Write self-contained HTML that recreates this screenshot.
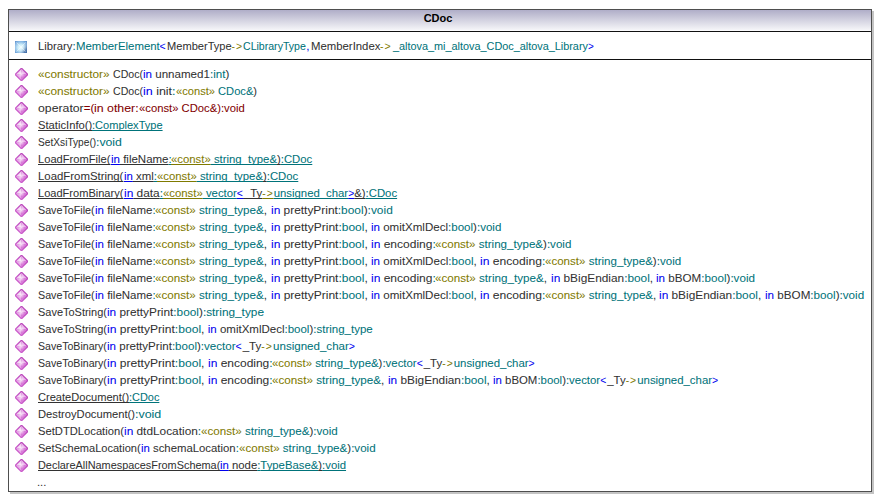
<!DOCTYPE html>
<html><head><meta charset="utf-8"><style>
html,body{margin:0;padding:0;background:#fff;width:881px;height:500px;overflow:hidden}
body{position:relative;font-family:"Liberation Sans",sans-serif}
.shr{position:absolute;left:872px;top:11px;width:2px;height:483px;background:#c4c4c4}
.shb{position:absolute;left:10px;top:492px;width:864px;height:2px;background:#c4c4c4}
.box{position:absolute;left:8px;top:9px;width:862px;height:481px;border:1px solid #4e4e4e;background:#fff}
.hd{position:absolute;left:0;top:0;width:862px;height:20px;background:linear-gradient(#b0aec8,#f5f5f8)}
.hw{position:absolute;left:0;top:20px;width:862px;height:1px;background:#fbfbfd}
.sep1{position:absolute;left:0;top:21px;width:862px;height:1px;background:#111}
.sep2{position:absolute;left:0;top:49px;width:862px;height:1px;background:#111}
.title{position:absolute;left:-2px;top:-2px;width:862px;text-align:center;font-weight:bold;font-size:11px;line-height:20px;color:#000}
.r{position:absolute;left:0;width:881px;height:17px;white-space:pre;font-size:11.5px;line-height:17px;-webkit-text-stroke:0.05px currentColor}
.c{position:absolute;top:0;transform-origin:0 0;white-space:pre}
.d{color:#323232}.t{color:#00737a}.b{color:#0000ee}.o{color:#7f7a00}.m{color:#820000}
.u span{text-decoration:underline;text-decoration-skip-ink:none}
.ic{position:absolute;left:15px;width:12px;height:12px}
</style></head><body>
<div class="shr"></div><div class="shb"></div>
<div class="box"><div class="hd"></div><div class="hw"></div><div class="sep1"></div><div class="sep2"></div><div class="title">CDoc</div></div>
<svg class="ic" style="top:41px" width="12" height="12" viewBox="0 0 12 12"><defs><radialGradient id="cg" cx="50%" cy="55%" r="72%"><stop offset="0" stop-color="#effdff"/><stop offset="0.35" stop-color="#cdeefa"/><stop offset="0.75" stop-color="#7fb2e2"/><stop offset="1" stop-color="#4a82c4"/></radialGradient><linearGradient id="cg2" x1="0" y1="0" x2="1" y2="0.6"><stop offset="0" stop-color="#ffffff" stop-opacity="0.1"/><stop offset="0.6" stop-color="#ffffff" stop-opacity="0"/><stop offset="1" stop-color="#103070" stop-opacity="0.45"/></linearGradient></defs><rect x="0" y="0" width="12" height="12" fill="url(#cg)"/><rect x="0" y="0" width="12" height="12" fill="url(#cg2)"/><path d="M1.5 1.5 L10.5 10.5 M10.5 1.5 L1.5 10.5" stroke="#ffffff" stroke-opacity="0.45" stroke-width="1"/></svg>
<svg class="ic" style="top:68px;width:13px;height:13px" width="13" height="13" viewBox="0 0 13 13"><use href="#dm"/></svg>
<svg class="ic" style="top:85px;width:13px;height:13px" width="13" height="13" viewBox="0 0 13 13"><use href="#dm"/></svg>
<svg class="ic" style="top:102px;width:13px;height:13px" width="13" height="13" viewBox="0 0 13 13"><use href="#dm"/></svg>
<svg class="ic" style="top:119px;width:13px;height:13px" width="13" height="13" viewBox="0 0 13 13"><use href="#dm"/></svg>
<svg class="ic" style="top:136px;width:13px;height:13px" width="13" height="13" viewBox="0 0 13 13"><use href="#dm"/></svg>
<svg class="ic" style="top:153px;width:13px;height:13px" width="13" height="13" viewBox="0 0 13 13"><use href="#dm"/></svg>
<svg class="ic" style="top:170px;width:13px;height:13px" width="13" height="13" viewBox="0 0 13 13"><use href="#dm"/></svg>
<svg class="ic" style="top:187px;width:13px;height:13px" width="13" height="13" viewBox="0 0 13 13"><use href="#dm"/></svg>
<svg class="ic" style="top:204px;width:13px;height:13px" width="13" height="13" viewBox="0 0 13 13"><use href="#dm"/></svg>
<svg class="ic" style="top:221px;width:13px;height:13px" width="13" height="13" viewBox="0 0 13 13"><use href="#dm"/></svg>
<svg class="ic" style="top:238px;width:13px;height:13px" width="13" height="13" viewBox="0 0 13 13"><use href="#dm"/></svg>
<svg class="ic" style="top:255px;width:13px;height:13px" width="13" height="13" viewBox="0 0 13 13"><use href="#dm"/></svg>
<svg class="ic" style="top:272px;width:13px;height:13px" width="13" height="13" viewBox="0 0 13 13"><use href="#dm"/></svg>
<svg class="ic" style="top:289px;width:13px;height:13px" width="13" height="13" viewBox="0 0 13 13"><use href="#dm"/></svg>
<svg class="ic" style="top:306px;width:13px;height:13px" width="13" height="13" viewBox="0 0 13 13"><use href="#dm"/></svg>
<svg class="ic" style="top:323px;width:13px;height:13px" width="13" height="13" viewBox="0 0 13 13"><use href="#dm"/></svg>
<svg class="ic" style="top:340px;width:13px;height:13px" width="13" height="13" viewBox="0 0 13 13"><use href="#dm"/></svg>
<svg class="ic" style="top:357px;width:13px;height:13px" width="13" height="13" viewBox="0 0 13 13"><use href="#dm"/></svg>
<svg class="ic" style="top:374px;width:13px;height:13px" width="13" height="13" viewBox="0 0 13 13"><use href="#dm"/></svg>
<svg class="ic" style="top:391px;width:13px;height:13px" width="13" height="13" viewBox="0 0 13 13"><use href="#dm"/></svg>
<svg class="ic" style="top:408px;width:13px;height:13px" width="13" height="13" viewBox="0 0 13 13"><use href="#dm"/></svg>
<svg class="ic" style="top:425px;width:13px;height:13px" width="13" height="13" viewBox="0 0 13 13"><use href="#dm"/></svg>
<svg class="ic" style="top:442px;width:13px;height:13px" width="13" height="13" viewBox="0 0 13 13"><use href="#dm"/></svg>
<svg class="ic" style="top:459px;width:13px;height:13px" width="13" height="13" viewBox="0 0 13 13"><use href="#dm"/></svg>
<div class="r" style="top:38px"><div class="c" style="left:38.10px;transform:scaleX(0.9805)"><span class="d">Library</span><span class="t">:</span></div><div class="c" style="left:75.70px;transform:scaleX(0.9933)"><span class="t">MemberElement</span></div><div class="c" style="left:159.50px;transform:scaleX(1.0000)"><span class="b" style="font-size:10.5px;letter-spacing:1px;-webkit-text-stroke:0">&lt;</span></div><div class="c" style="left:166.80px;transform:scaleX(0.9641)"><span class="d">MemberType</span></div><div class="c" style="left:231.50px;transform:scaleX(1.0000)"><span class="o" style="font-size:10.5px;letter-spacing:1px;-webkit-text-stroke:0">-&gt;</span></div><div class="c" style="left:243.40px;transform:scaleX(0.9183)"><span class="t">CLibraryType</span></div><div class="c" style="left:306.20px;transform:scaleX(1.0000)"><span class="b">,</span></div><div class="c" style="left:310.70px;transform:scaleX(0.9871)"><span class="d">MemberIndex</span></div><div class="c" style="left:380.10px;transform:scaleX(1.0000)"><span class="o" style="font-size:10.5px;letter-spacing:1px;-webkit-text-stroke:0">-&gt;</span></div><div class="c" style="left:393.34px;transform:scaleX(0.9441)"><span class="t">_altova_mi_altova_CDoc_altova_Library</span><span class="b" style="font-size:10.5px;-webkit-text-stroke:0">&gt;</span></div></div>
<div class="r" style="top:66px"><div class="c" style="left:38.10px;transform:scaleX(1.0279)"><span class="o">«constructor»</span><span class="d"> </span></div><div class="c" style="left:113.00px;transform:scaleX(0.9207)"><span class="d">CDoc(</span></div><div class="c" style="left:143.00px;transform:scaleX(1.0066)"><span class="b">in</span><span class="d"> unnamed1</span><span class="t">:</span><span class="t">int</span><span class="d">)</span></div></div>
<div class="r" style="top:83px"><div class="c" style="left:38.10px;transform:scaleX(1.0279)"><span class="o">«constructor»</span><span class="d"> </span></div><div class="c" style="left:113.00px;transform:scaleX(0.9207)"><span class="d">CDoc(</span></div><div class="c" style="left:143.00px;transform:scaleX(1.0818)"><span class="b">in</span><span class="d"> init</span><span class="t">:</span></div><div class="c" style="left:175.50px;transform:scaleX(0.9678)"><span class="o">«const»</span><span class="t"> CDoc&amp;</span><span class="d">)</span></div></div>
<div class="r" style="top:100px"><div class="c" style="left:38.10px;transform:scaleX(1.0669)"><span class="d">operator</span></div><div class="c" style="left:83.80px;transform:scaleX(1.0000)"><span class="m">=</span><span class="m">(</span></div><div class="c" style="left:94.30px;transform:scaleX(1.0733)"><span class="m">in</span><span class="m"> other:</span></div><div class="c" style="left:138.90px;transform:scaleX(0.9784)"><span class="m">«const»</span><span class="m"> CDoc&amp;):void</span></div></div>
<div class="r u" style="top:117px"><div class="c" style="left:38.10px;transform:scaleX(0.9748)"><span class="d">StaticInfo()</span></div><div class="c" style="left:92.34px;transform:scaleX(0.9602)"><span class="t">:ComplexType</span></div></div>
<div class="r" style="top:134px"><div class="c" style="left:38.10px;transform:scaleX(0.8841)"><span class="d">SetXsiType()</span></div><div class="c" style="left:96.23px;transform:scaleX(1.0671)"><span class="t">:void</span></div></div>
<div class="r u" style="top:151px"><div class="c" style="left:38.10px;transform:scaleX(0.9683)"><span class="d">LoadFromFile(</span></div><div class="c" style="left:110.50px;transform:scaleX(0.9997)"><span class="b">in</span><span class="d"> fileName</span><span class="t">:</span></div><div class="c" style="left:171.20px;transform:scaleX(0.9866)"><span class="o">«const»</span><span class="t"> string_type&amp;</span><span class="d">)</span><span class="t">:CDoc</span></div></div>
<div class="r u" style="top:168px"><div class="c" style="left:38.10px;transform:scaleX(0.9898)"><span class="d">LoadFromString(</span></div><div class="c" style="left:123.50px;transform:scaleX(0.9932)"><span class="b">in</span><span class="d"> xml</span><span class="t">:</span></div><div class="c" style="left:156.50px;transform:scaleX(0.9866)"><span class="o">«const»</span><span class="t"> string_type&amp;</span><span class="d">)</span><span class="t">:CDoc</span></div></div>
<div class="r u" style="top:185px"><div class="c" style="left:38.10px;transform:scaleX(0.9613)"><span class="d">LoadFromBinary(</span></div><div class="c" style="left:123.50px;transform:scaleX(1.0338)"><span class="b">in</span><span class="d"> data</span><span class="t">:</span></div><div class="c" style="left:162.50px;transform:scaleX(0.9871)"><span class="o">«const»</span><span class="t"> vector</span><span class="b" style="font-size:10.5px;letter-spacing:1px;-webkit-text-stroke:0">&lt;</span><span class="d">_Ty</span><span class="o" style="font-size:10.5px;letter-spacing:1px;-webkit-text-stroke:0">-&gt;</span><span class="t">unsigned_char</span><span class="b" style="font-size:10.5px;-webkit-text-stroke:0">&gt;</span><span class="d">&amp;)</span><span class="t">:CDoc</span></div></div>
<div class="r" style="top:202px"><div class="c" style="left:38.10px;transform:scaleX(0.9322)"><span class="d">SaveToFile(</span></div><div class="c" style="left:94.70px;transform:scaleX(0.9981)"><span class="b">in</span><span class="d"> fileName</span><span class="t">:</span></div><div class="c" style="left:155.30px;transform:scaleX(1.0124)"><span class="o">«const»</span><span class="t"> string_type&amp;</span><span class="d">, </span></div><div class="c" style="left:270.50px;transform:scaleX(1.0348)"><span class="b">in</span><span class="d"> prettyPrint</span><span class="t">:</span><span class="t">bool</span><span class="d">)</span><span class="t">:void</span></div></div>
<div class="r" style="top:219px"><div class="c" style="left:38.10px;transform:scaleX(0.9322)"><span class="d">SaveToFile(</span></div><div class="c" style="left:94.70px;transform:scaleX(0.9981)"><span class="b">in</span><span class="d"> fileName</span><span class="t">:</span></div><div class="c" style="left:155.30px;transform:scaleX(1.0124)"><span class="o">«const»</span><span class="t"> string_type&amp;</span><span class="d">, </span></div><div class="c" style="left:270.50px;transform:scaleX(1.0440)"><span class="b">in</span><span class="d"> prettyPrint</span><span class="t">:</span><span class="t">bool</span><span class="d">, </span></div><div class="c" style="left:370.60px;transform:scaleX(1.0043)"><span class="b">in</span><span class="d"> omitXmlDecl</span><span class="t">:</span><span class="t">bool</span><span class="d">)</span><span class="t">:void</span></div></div>
<div class="r" style="top:236px"><div class="c" style="left:38.10px;transform:scaleX(0.9322)"><span class="d">SaveToFile(</span></div><div class="c" style="left:94.70px;transform:scaleX(0.9981)"><span class="b">in</span><span class="d"> fileName</span><span class="t">:</span></div><div class="c" style="left:155.30px;transform:scaleX(1.0124)"><span class="o">«const»</span><span class="t"> string_type&amp;</span><span class="d">, </span></div><div class="c" style="left:270.50px;transform:scaleX(1.0440)"><span class="b">in</span><span class="d"> prettyPrint</span><span class="t">:</span><span class="t">bool</span><span class="d">, </span></div><div class="c" style="left:370.60px;transform:scaleX(1.0448)"><span class="b">in</span><span class="d"> encoding</span><span class="t">:</span></div><div class="c" style="left:435.40px;transform:scaleX(1.0058)"><span class="o">«const»</span><span class="t"> string_type&amp;</span><span class="d">)</span><span class="t">:void</span></div></div>
<div class="r" style="top:253px"><div class="c" style="left:38.10px;transform:scaleX(0.9322)"><span class="d">SaveToFile(</span></div><div class="c" style="left:94.70px;transform:scaleX(0.9981)"><span class="b">in</span><span class="d"> fileName</span><span class="t">:</span></div><div class="c" style="left:155.30px;transform:scaleX(1.0124)"><span class="o">«const»</span><span class="t"> string_type&amp;</span><span class="d">, </span></div><div class="c" style="left:270.50px;transform:scaleX(1.0440)"><span class="b">in</span><span class="d"> prettyPrint</span><span class="t">:</span><span class="t">bool</span><span class="d">, </span></div><div class="c" style="left:370.60px;transform:scaleX(1.0082)"><span class="b">in</span><span class="d"> omitXmlDecl</span><span class="t">:</span><span class="t">bool</span><span class="d">, </span></div><div class="c" style="left:479.50px;transform:scaleX(1.0529)"><span class="b">in</span><span class="d"> encoding</span><span class="t">:</span></div><div class="c" style="left:544.80px;transform:scaleX(1.0043)"><span class="o">«const»</span><span class="t"> string_type&amp;</span><span class="d">)</span><span class="t">:void</span></div></div>
<div class="r" style="top:270px"><div class="c" style="left:38.10px;transform:scaleX(0.9322)"><span class="d">SaveToFile(</span></div><div class="c" style="left:94.70px;transform:scaleX(0.9981)"><span class="b">in</span><span class="d"> fileName</span><span class="t">:</span></div><div class="c" style="left:155.30px;transform:scaleX(1.0124)"><span class="o">«const»</span><span class="t"> string_type&amp;</span><span class="d">, </span></div><div class="c" style="left:270.50px;transform:scaleX(1.0440)"><span class="b">in</span><span class="d"> prettyPrint</span><span class="t">:</span><span class="t">bool</span><span class="d">, </span></div><div class="c" style="left:370.60px;transform:scaleX(1.0448)"><span class="b">in</span><span class="d"> encoding</span><span class="t">:</span></div><div class="c" style="left:435.40px;transform:scaleX(1.0124)"><span class="o">«const»</span><span class="t"> string_type&amp;</span><span class="d">, </span></div><div class="c" style="left:550.60px;transform:scaleX(1.0303)"><span class="b">in</span><span class="d"> bBigEndian</span><span class="t">:</span><span class="t">bool</span><span class="d">, </span></div><div class="c" style="left:656.00px;transform:scaleX(1.0113)"><span class="b">in</span><span class="d"> bBOM</span><span class="t">:</span><span class="t">bool</span><span class="d">)</span><span class="t">:void</span></div></div>
<div class="r" style="top:287px"><div class="c" style="left:38.10px;transform:scaleX(0.9322)"><span class="d">SaveToFile(</span></div><div class="c" style="left:94.70px;transform:scaleX(0.9981)"><span class="b">in</span><span class="d"> fileName</span><span class="t">:</span></div><div class="c" style="left:155.30px;transform:scaleX(1.0124)"><span class="o">«const»</span><span class="t"> string_type&amp;</span><span class="d">, </span></div><div class="c" style="left:270.50px;transform:scaleX(1.0440)"><span class="b">in</span><span class="d"> prettyPrint</span><span class="t">:</span><span class="t">bool</span><span class="d">, </span></div><div class="c" style="left:370.60px;transform:scaleX(1.0082)"><span class="b">in</span><span class="d"> omitXmlDecl</span><span class="t">:</span><span class="t">bool</span><span class="d">, </span></div><div class="c" style="left:479.50px;transform:scaleX(1.0529)"><span class="b">in</span><span class="d"> encoding</span><span class="t">:</span></div><div class="c" style="left:544.80px;transform:scaleX(1.0063)"><span class="o">«const»</span><span class="t"> string_type&amp;</span><span class="d">, </span></div><div class="c" style="left:659.30px;transform:scaleX(1.0313)"><span class="b">in</span><span class="d"> bBigEndian</span><span class="t">:</span><span class="t">bool</span><span class="d">, </span></div><div class="c" style="left:764.80px;transform:scaleX(1.0134)"><span class="b">in</span><span class="d"> bBOM</span><span class="t">:</span><span class="t">bool</span><span class="d">)</span><span class="t">:void</span></div></div>
<div class="r" style="top:304px"><div class="c" style="left:38.10px;transform:scaleX(0.9539)"><span class="d">SaveToString(</span></div><div class="c" style="left:107.00px;transform:scaleX(1.0271)"><span class="b">in</span><span class="d"> prettyPrint</span><span class="t">:</span><span class="t">bool</span><span class="d">)</span><span class="t">:string_type</span></div></div>
<div class="r" style="top:321px"><div class="c" style="left:38.10px;transform:scaleX(0.9539)"><span class="d">SaveToString(</span></div><div class="c" style="left:107.00px;transform:scaleX(1.0513)"><span class="b">in</span><span class="d"> prettyPrint</span><span class="t">:</span><span class="t">bool</span><span class="d">, </span></div><div class="c" style="left:207.80px;transform:scaleX(1.0000)"><span class="b">in</span><span class="d"> omitXmlDecl</span><span class="t">:</span><span class="t">bool</span><span class="d">)</span><span class="t">:string_type</span></div></div>
<div class="r" style="top:338px"><div class="c" style="left:38.10px;transform:scaleX(0.9213)"><span class="d">SaveToBinary(</span></div><div class="c" style="left:107.00px;transform:scaleX(1.0050)"><span class="b">in</span><span class="d"> prettyPrint</span><span class="t">:</span><span class="t">bool</span><span class="d">)</span><span class="t">:vector</span><span class="b" style="font-size:10.5px;letter-spacing:1px;-webkit-text-stroke:0">&lt;</span><span class="d">_Ty</span><span class="o" style="font-size:10.5px;letter-spacing:1px;-webkit-text-stroke:0">-&gt;</span><span class="t">unsigned_char</span><span class="b" style="font-size:10.5px;-webkit-text-stroke:0">&gt;</span></div></div>
<div class="r" style="top:355px"><div class="c" style="left:38.10px;transform:scaleX(0.9213)"><span class="d">SaveToBinary(</span></div><div class="c" style="left:107.00px;transform:scaleX(1.0513)"><span class="b">in</span><span class="d"> prettyPrint</span><span class="t">:</span><span class="t">bool</span><span class="d">, </span></div><div class="c" style="left:207.80px;transform:scaleX(1.0416)"><span class="b">in</span><span class="d"> encoding</span><span class="t">:</span></div><div class="c" style="left:272.40px;transform:scaleX(0.9925)"><span class="o">«const»</span><span class="t"> string_type&amp;</span><span class="d">)</span><span class="t">:vector</span><span class="b" style="font-size:10.5px;letter-spacing:1px;-webkit-text-stroke:0">&lt;</span><span class="d">_Ty</span><span class="o" style="font-size:10.5px;letter-spacing:1px;-webkit-text-stroke:0">-&gt;</span><span class="t">unsigned_char</span><span class="b" style="font-size:10.5px;-webkit-text-stroke:0">&gt;</span></div></div>
<div class="r" style="top:372px"><div class="c" style="left:38.10px;transform:scaleX(0.9213)"><span class="d">SaveToBinary(</span></div><div class="c" style="left:107.00px;transform:scaleX(1.0513)"><span class="b">in</span><span class="d"> prettyPrint</span><span class="t">:</span><span class="t">bool</span><span class="d">, </span></div><div class="c" style="left:207.80px;transform:scaleX(1.0416)"><span class="b">in</span><span class="d"> encoding</span><span class="t">:</span></div><div class="c" style="left:272.40px;transform:scaleX(1.0159)"><span class="o">«const»</span><span class="t"> string_type&amp;</span><span class="d">, </span></div><div class="c" style="left:388.00px;transform:scaleX(1.0274)"><span class="b">in</span><span class="d"> bBigEndian</span><span class="t">:</span><span class="t">bool</span><span class="d">, </span></div><div class="c" style="left:493.10px;transform:scaleX(0.9918)"><span class="b">in</span><span class="d"> bBOM</span><span class="t">:</span><span class="t">bool</span><span class="d">)</span><span class="t">:vector</span><span class="b" style="font-size:10.5px;letter-spacing:1px;-webkit-text-stroke:0">&lt;</span><span class="d">_Ty</span><span class="o" style="font-size:10.5px;letter-spacing:1px;-webkit-text-stroke:0">-&gt;</span><span class="t">unsigned_char</span><span class="b" style="font-size:10.5px;-webkit-text-stroke:0">&gt;</span></div></div>
<div class="r u" style="top:389px"><div class="c" style="left:38.10px;transform:scaleX(0.9642)"><span class="d">CreateDocument()</span></div><div class="c" style="left:129.35px;transform:scaleX(0.9503)"><span class="t">:CDoc</span></div></div>
<div class="r" style="top:406px"><div class="c" style="left:38.10px;transform:scaleX(0.9730)"><span class="d">DestroyDocument()</span></div><div class="c" style="left:135.02px;transform:scaleX(1.0797)"><span class="t">:void</span></div></div>
<div class="r" style="top:423px"><div class="c" style="left:38.10px;transform:scaleX(0.9739)"><span class="d">SetDTDLocation(</span></div><div class="c" style="left:124.00px;transform:scaleX(1.0307)"><span class="b">in</span><span class="d"> dtdLocation</span><span class="t">:</span></div><div class="c" style="left:201.10px;transform:scaleX(1.0095)"><span class="o">«const»</span><span class="t"> string_type&amp;</span><span class="d">)</span><span class="t">:void</span></div></div>
<div class="r" style="top:440px"><div class="c" style="left:38.10px;transform:scaleX(0.9611)"><span class="d">SetSchemaLocation(</span></div><div class="c" style="left:140.70px;transform:scaleX(0.9870)"><span class="b">in</span><span class="d"> schemaLocation</span><span class="t">:</span></div><div class="c" style="left:238.50px;transform:scaleX(1.0080)"><span class="o">«const»</span><span class="t"> string_type&amp;</span><span class="d">)</span><span class="t">:void</span></div></div>
<div class="r u" style="top:457px"><div class="c" style="left:38.10px;transform:scaleX(0.9477)"><span class="d">DeclareAllNamespacesFromSchema(</span></div><div class="c" style="left:220.40px;transform:scaleX(0.9854)"><span class="b">in</span><span class="d"> node</span><span class="t">:</span><span class="t">TypeBase&amp;</span><span class="d">)</span><span class="t">:void</span></div></div>
<div class="r" style="top:474px"><div class="c" style="left:37.13px;transform:scaleX(0.9691)"><span class="d">...</span></div></div>
<svg width="0" height="0" style="position:absolute;left:0;top:0"><defs><linearGradient id="dgo" x1="0" y1="1" x2="1" y2="0"><stop offset="0" stop-color="#d468d4"/><stop offset="1" stop-color="#b23cb2"/></linearGradient><radialGradient id="dg"><stop offset="0" stop-color="#ffffff" stop-opacity="0.75"/><stop offset="1" stop-color="#ffffff" stop-opacity="0"/></radialGradient><g id="dm"><path d="M5.8 0 H7.2 L13 5.8 V7.2 L7.2 13 H5.8 L0 7.2 V5.8 Z" fill="url(#dgo)"/><path d="M6.5 1.1 L6.5 6.5 L1.1 6.5 Z" fill="#f3d6f3"/><path d="M6.5 1.1 L11.9 6.5 L6.5 6.5 Z" fill="#ebb6eb"/><path d="M1.1 6.5 L6.5 6.5 L6.5 11.9 Z" fill="#e8aae8"/><path d="M11.9 6.5 L6.5 6.5 L6.5 11.9 Z" fill="#da7cda"/><circle cx="6.3" cy="6.3" r="3.2" fill="url(#dg)"/></g></defs></svg>
</body></html>
